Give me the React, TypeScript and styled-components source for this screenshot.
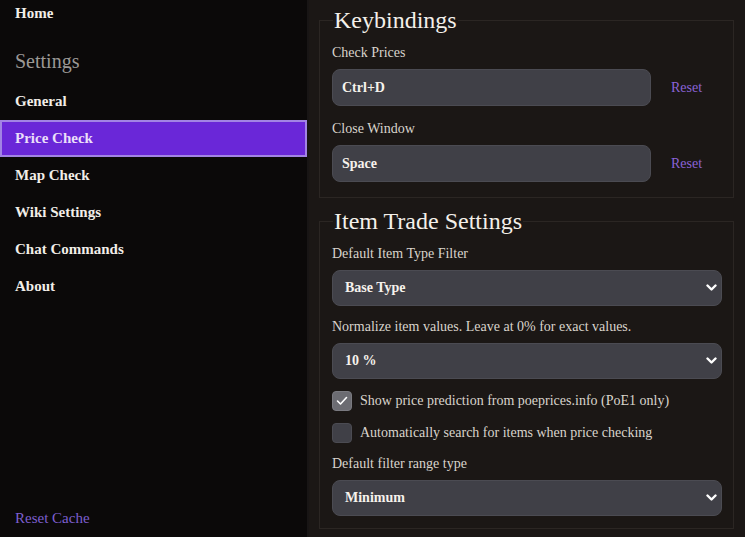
import React from "react";
import styled, { createGlobalStyle } from "styled-components";

const Global = createGlobalStyle`
  html, body { margin: 0; padding: 0; background: #1b1715; }
  body { font-family: "Liberation Serif", "Times New Roman", serif; overflow: hidden; }
  * { box-sizing: border-box; }
`;

const Shell = styled.div`
  display: flex;
  height: 537px;
  width: 745px;
`;

const Sidebar = styled.nav`
  width: 309px;
  flex: none;
  background: #0b0909;
  border-right: 2px solid #181515;
  display: flex;
  flex-direction: column;
`;

const NavItem = styled.div<{ $active?: boolean; $accent?: boolean; $short?: boolean }>`
  height: ${(p) => (p.$short ? "27px" : "37px")};
  display: flex;
  align-items: center;
  padding-left: ${(p) => (p.$active ? "13px" : "15px")};
  font-size: 15px;
  font-weight: ${(p) => (p.$accent ? 400 : 700)};
  color: ${(p) => (p.$accent ? "#7d5fcf" : p.$active ? "#eadff9" : "#f2eee8")};
  background: ${(p) => (p.$active ? "#6a27d8" : "transparent")};
  border: ${(p) => (p.$active ? "2px solid #a283e4" : "none")};
  width: ${(p) => (p.$active ? "307px" : "auto")};
`;

const SectionHead = styled.div`
  height: 56px;
  display: flex;
  align-items: flex-end;
  padding: 0 0 10px 15px;
  font-size: 20px;
  line-height: 24px;
  color: #9b9896;
`;

const Spacer = styled.div`
  flex: 1;
`;

const Main = styled.main`
  flex: 1;
  padding: 6px 11px 0 10px;
  display: flex;
  flex-direction: column;
  gap: 9px;
  color: #d9d4cc;
`;

const Fieldset = styled.fieldset<{ $gap: number; $pb: number }>`
  margin: 0;
  border: 1px solid #2b2623;
  padding: 0 11px ${(p) => p.$pb}px 12px;
  display: flex;
  flex-direction: column;
  gap: ${(p) => p.$gap}px;
`;

const Legend = styled.legend`
  font-size: 24px;
  line-height: 28px;
  padding: 0 1px;
  margin-left: 1px;
  color: #f4f0ea;
  margin-bottom: 9px;
`;

const Field = styled.div`
  display: flex;
  flex-direction: column;
  gap: 6px;
`;

const Label = styled.div`
  font-size: 14px;
  line-height: 20px;
  color: #d9d4cc;
`;

const Row = styled.div`
  display: flex;
  align-items: center;
`;

const KeyInput = styled.div`
  flex: 1;
  height: 37px;
  border-radius: 8px;
  background: #404047;
  border: 1px solid #4b4b52;
  display: flex;
  align-items: center;
  padding-left: 9px;
  font-size: 14px;
  font-weight: 700;
  color: #f6f2ec;
`;

const ResetBtn = styled.div`
  width: 71px;
  text-align: center;
  font-size: 14px;
  color: #8a63d6;
`;

const SelectBox = styled.div`
  position: relative;
  height: 36px;
  border-radius: 8px;
  background: #404047;
  border: 1px solid #4b4b52;
  display: flex;
  align-items: center;
  padding-left: 12px;
  font-size: 14px;
  font-weight: 700;
  color: #f6f2ec;
`;

const Chevron = styled.svg`
  position: absolute;
  right: 4px;
  top: 50%;
  margin-top: -4px;
`;

const CheckRow = styled.div`
  display: flex;
  align-items: center;
  gap: 8px;
  height: 20px;
  font-size: 14px;
  color: #d9d4cc;
`;

const CheckBox = styled.div<{ $checked?: boolean }>`
  width: 20px;
  height: 20px;
  border-radius: 4px;
  background: ${(p) => (p.$checked ? "#6c6c72" : "#404047")};
  border: 1px solid ${(p) => (p.$checked ? "#7a7a80" : "#4b4b52")};
  display: flex;
  align-items: center;
  justify-content: center;
`;

const FieldGroup = styled.div`
  display: flex;
  flex-direction: column;
  gap: 12px;
  margin: 1px 0 0;
`;

const Select = ({ value }: { value: string }) => (
  <SelectBox>
    {value}
    <Chevron width="11" height="8" viewBox="0 0 11 8">
      <polyline points="1.5,1.5 5.5,5.5 9.5,1.5" fill="none" stroke="#ffffff" strokeWidth="2.4" strokeLinecap="round" strokeLinejoin="round" />
    </Chevron>
  </SelectBox>
);

export default function App() {
  return (
    <Shell>
      <Global />
      <Sidebar>
        <NavItem $short>Home</NavItem>
        <SectionHead>Settings</SectionHead>
        <NavItem>General</NavItem>
        <NavItem $active>Price Check</NavItem>
        <NavItem>Map Check</NavItem>
        <NavItem>Wiki Settings</NavItem>
        <NavItem>Chat Commands</NavItem>
        <NavItem>About</NavItem>
        <Spacer />
        <NavItem $accent>Reset Cache</NavItem>
      </Sidebar>
      <Main>
        <Fieldset $gap={13} $pb={15}>
          <Legend>Keybindings</Legend>
          <Field>
            <Label>Check Prices</Label>
            <Row>
              <KeyInput>Ctrl+D</KeyInput>
              <ResetBtn>Reset</ResetBtn>
            </Row>
          </Field>
          <Field>
            <Label>Close Window</Label>
            <Row>
              <KeyInput>Space</KeyInput>
              <ResetBtn>Reset</ResetBtn>
            </Row>
          </Field>
        </Fieldset>
        <Fieldset $gap={11} $pb={12}>
          <Legend>Item Trade Settings</Legend>
          <Field>
            <Label>Default Item Type Filter</Label>
            <Select value="Base Type" />
          </Field>
          <Field>
            <Label>Normalize item values. Leave at 0% for exact values.</Label>
            <Select value="10 %" />
          </Field>
          <FieldGroup>
            <CheckRow>
              <CheckBox $checked>
                <svg width="12" height="10" viewBox="0 0 12 10">
                  <polyline points="1.5,5 4.5,8 10.5,1.5" fill="none" stroke="#ffffff" strokeWidth="1.6" strokeLinecap="round" strokeLinejoin="round" />
                </svg>
              </CheckBox>
              Show price prediction from poeprices.info (PoE1 only)
            </CheckRow>
            <CheckRow>
              <CheckBox />
              Automatically search for items when price checking
            </CheckRow>
          </FieldGroup>
          <Field>
            <Label>Default filter range type</Label>
            <Select value="Minimum" />
          </Field>
        </Fieldset>
      </Main>
    </Shell>
  );
}
